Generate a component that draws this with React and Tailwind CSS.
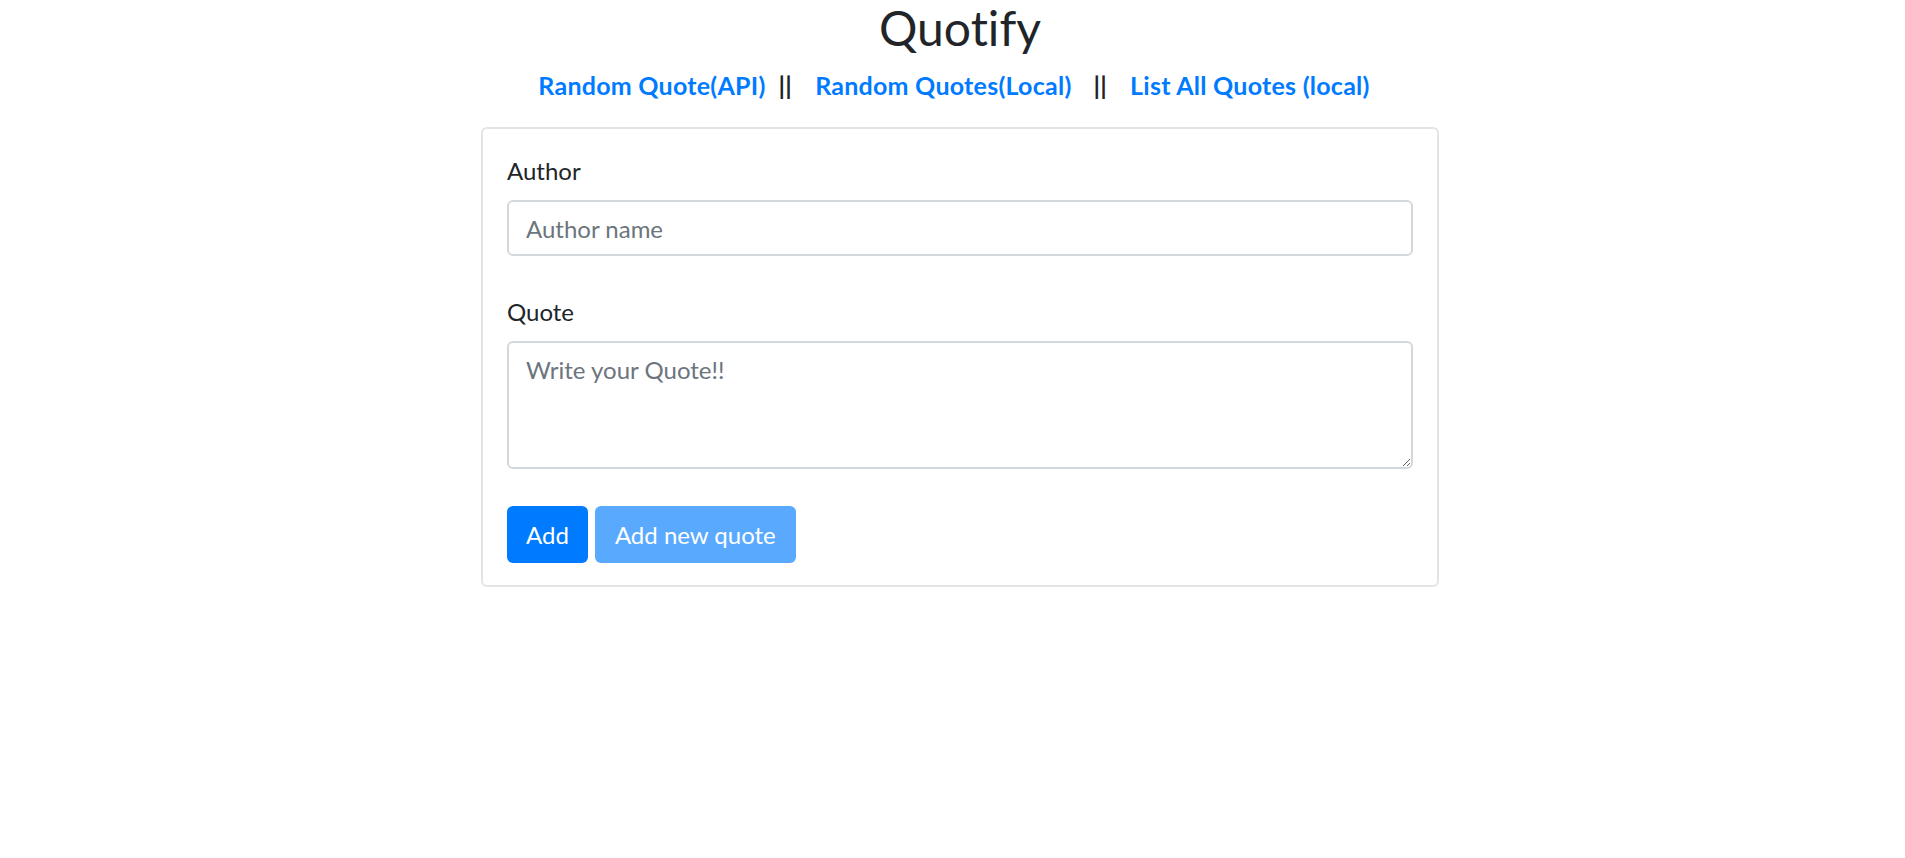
export default function App() {
  return (
    <div className="min-h-screen bg-white pl-[15px] font-['Lato',sans-serif] text-[#212529] [font-variant-ligatures:none]">
      <div className="flex flex-col items-center">
        <h1 className="text-[48px] leading-[56px] font-normal">Quotify</h1>

        <nav className="mt-[11px] mr-[12px] flex items-center text-[25px] leading-[36px] font-bold tracking-[0.25px]">
          <a href="#" className="text-[#007bff]">Random Quote(API)</a>
          <span className="ml-[13px] mr-[23px]">||</span>
          <a href="#" className="text-[#007bff]">Random Quotes(Local)</a>
          <span className="ml-[22px] mr-[23px]">||</span>
          <a href="#" className="text-[#007bff]">List All Quotes (local)</a>
        </nav>

        <form className="mt-[24px] w-[958px] rounded-[6px] border-2 border-[#e3e4e6] p-[24px] pb-[22px]">
          <label className="block mb-[11px] text-[24px] leading-[36px]">Author</label>
          <input
            type="text"
            placeholder="Author name"
            className="block w-full h-[56px] rounded-[6px] border-2 border-[#d3d8dd] px-[17px] text-[24px] leading-[36px] text-[#495057] placeholder:text-[#6c757d] outline-none"
          />

          <label className="block mt-[38px] mb-[11px] text-[24px] leading-[36px]">Quote</label>
          <textarea
            placeholder="Write your Quote!!"
            className="block w-full h-[128px] rounded-[6px] border-2 border-[#d3d8dd] px-[17px] pt-[9px] text-[24px] leading-[36px] text-[#495057] placeholder:text-[#6c757d] outline-none"
          />

          <div className="mt-[37px] flex gap-[7px]">
            <button type="submit" className="h-[57px] rounded-[6px] bg-[#007bff] px-[19px] text-[24px] text-white">
              Add
            </button>
            <button type="button" className="h-[57px] rounded-[6px] bg-[#59a9ff] px-[20px] text-[24px] text-white">
              Add new quote
            </button>
          </div>
        </form>
      </div>
    </div>
  );
}
